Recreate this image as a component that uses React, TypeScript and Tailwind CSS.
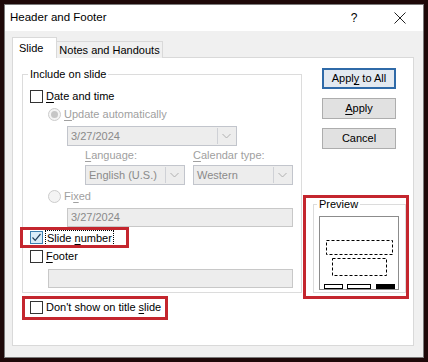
import React from "react";

const font = { fontFamily: '"Liberation Sans", Arial, sans-serif' };

function U({ children }: { children: React.ReactNode }) {
  return <span className="underline underline-offset-2 decoration-1">{children}</span>;
}

function Check({ checked = false }: { checked?: boolean }) {
  return checked ? (
    <div className="w-[13px] h-[13px] border border-[#3c7fb1] bg-[#d9ecf9] flex items-center justify-center shrink-0">
      <svg width="11" height="11" viewBox="0 0 11 11">
        <path d="M1.5 5.5 L4.2 8.3 L9.5 2" fill="none" stroke="#1f3d5a" strokeWidth="1.2" />
      </svg>
    </div>
  ) : (
    <div className="w-[13px] h-[13px] border border-[#333333] bg-white shrink-0" />
  );
}

function Radio({ selected = false }: { selected?: boolean }) {
  return (
    <div className="w-[13px] h-[13px] rounded-full border border-[#cccccc] bg-[#f4f4f4] flex items-center justify-center shrink-0">
      {selected && <div className="w-[7px] h-[7px] rounded-full bg-[#c6c6c6]" />}
    </div>
  );
}

function Combo({ text, w, h = 20 }: { text: string; w: string; h?: number }) {
  return (
    <div
      className={`${w} border border-[#c2c5cc] bg-[#ededed] flex items-stretch`}
      style={{ height: h }}
    >
      <div className="flex-1 flex items-center pl-[3px] text-[11px] text-[#8a8a8a] whitespace-nowrap">{text}</div>
      <div className="w-[18px] border-l border-[#cfd1d6] m-[1px] ml-0 flex items-center justify-center bg-[#ededed]">
        <svg width="9" height="6" viewBox="0 0 9 6">
          <path d="M0.5 1 L4.5 5 L8.5 1" fill="none" stroke="#b0b0b0" strokeWidth="1" />
        </svg>
      </div>
    </div>
  );
}

function Box({ text, w }: { text: string; w: string }) {
  return (
    <div className={`${w} h-[19px] border border-[#c8c8c8] bg-[#ededed] flex items-center pl-[3px] text-[11px] text-[#8a8a8a]`}>
      {text}
    </div>
  );
}

export default function App() {
  return (
    <div className="w-[428px] h-[362px] bg-[#1e0909] pt-[4px] pl-[4px] overflow-hidden" style={font}>
      <div className="w-[420px] h-[354px] border border-[#7a7a7a] bg-[#f0f0f0] flex flex-col">
        {/* Title bar */}
        <div className="h-[26px] bg-white flex items-center shrink-0">
          <div className="pl-[5px] text-[11.5px] text-black whitespace-nowrap">Header and Footer</div>
          <div className="ml-auto flex items-center">
            <div className="w-[46px] flex justify-center text-[12px] text-black">?</div>
            <div className="w-[46px] flex justify-center">
              <svg width="12" height="12" viewBox="0 0 12 12">
                <path d="M0.5 0.5 L11.5 11.5 M11.5 0.5 L0.5 11.5" stroke="#222" strokeWidth="1" />
              </svg>
            </div>
          </div>
        </div>

        {/* Body */}
        <div className="flex-1 pl-[7px] pt-[7px]">
          {/* Tabs */}
          <div className="h-[20px] flex items-end relative z-10 -mb-px">
            <div className="w-[45px] h-[21px] bg-white border border-[#d9d9d9] border-b-0 flex items-center pl-[6px] text-[11px] text-black">
              Slide
            </div>
            <div className="w-[106px] h-[17px] bg-[#f0f0f0] border border-[#d9d9d9] border-l-0 border-b-0 flex items-center justify-center text-[11px] text-black whitespace-nowrap">
              Notes and Handouts
            </div>
          </div>

          {/* Panel */}
          <div className="w-[402px] h-[289px] border border-[#d9d9d9] bg-white relative flex">
            {/* Left column */}
            <div className="ml-[9px] mt-[16px] flex flex-col">
              <div className="relative w-[280px] border border-[#dcdcdc] pt-[12px] pb-[4px] flex flex-col text-[11px] text-black">
                <span className="absolute -top-[9px] left-[5px] bg-white px-[2px] leading-[16px] whitespace-nowrap">Include on slide</span>

                <div className="h-[18px] flex items-center pl-[7px]">
                  <Check />
                  <span className="ml-[3px]"><U>D</U>ate and time</span>
                </div>
                <div className="h-[18px] flex items-center pl-[25px]">
                  <Radio selected />
                  <span className="ml-[3px] text-[#a0a0a0]"><U>U</U>pdate automatically</span>
                </div>
                <div className="mt-[3px] ml-[44px]">
                  <Combo text="3/27/2024" w="w-[170px]" />
                </div>
                <div className="h-[18px] flex items-center ml-[62px] text-[#a0a0a0]">
                  <span className="w-[108px]"><U>L</U>anguage:</span>
                  <span><U>C</U>alendar type:</span>
                </div>
                <div className="mt-[1px] ml-[62px] flex gap-[8px]">
                  <Combo text="English (U.S.)" w="w-[100px]" />
                  <Combo text="Western" w="w-[100px]" />
                </div>
                <div className="mt-[2px] h-[18px] flex items-center pl-[25px]">
                  <Radio />
                  <span className="ml-[3px] text-[#a0a0a0]">Fi<U>x</U>ed</span>
                </div>
                <div className="mt-[3px] ml-[44px]">
                  <Box text="3/27/2024" w="w-[226px]" />
                </div>
                <div className="mt-[1px] h-[19px] flex items-center pl-[7px]">
                  <Check checked />
                  <span className="ml-[2px] px-[1px] border border-dotted border-black leading-[14px] whitespace-nowrap">
                    Slide <U>n</U>umber
                  </span>
                </div>
                <div className="h-[18px] flex items-center pl-[7px]">
                  <Check />
                  <span className="ml-[3px]"><U>F</U>ooter</span>
                </div>
                <div className="mt-[4px] ml-[25px]">
                  <Box text="" w="w-[245px]" />
                </div>
              </div>

              <div className="mt-[5px] h-[18px] flex items-center pl-[8px] text-[11px] text-black whitespace-nowrap">
                <Check />
                <span className="ml-[3px]">Don't show on title <U>s</U>lide</span>
              </div>
            </div>

            {/* Right column */}
            <div className="ml-[11px] flex flex-col">
              <div className="mt-[10px] ml-[9px] flex flex-col gap-[9px]">
                <button className="w-[74px] h-[21px] border-2 border-[#2f6aa8] bg-[#e3e9f0] text-[11px] text-black flex items-center justify-center whitespace-nowrap">
                  Appl<U>y</U>&nbsp;to All
                </button>
                <button className="w-[74px] h-[21px] border border-[#adadad] bg-[#e1e1e1] text-[11px] text-black flex items-center justify-center">
                  <U>A</U>pply
                </button>
                <button className="w-[74px] h-[21px] border border-[#adadad] bg-[#e1e1e1] text-[11px] text-black flex items-center justify-center">
                  Cancel
                </button>
              </div>

              {/* Preview */}
              <div className="mt-[55px] relative w-[93px] h-[89px] border border-[#dcdcdc] pl-[5px] pt-[11px]">
                <span className="absolute -top-[9px] left-[3px] bg-white px-[2px] text-[11px] text-black leading-[16px]">Preview</span>
                <svg width="80" height="74" viewBox="0 0 80 74" className="block">
                  <rect x="0.5" y="0.5" width="79" height="73" fill="#fff" stroke="#8c8c8c" />
                  <rect x="7.5" y="24.5" width="66" height="14" fill="none" stroke="#000" strokeDasharray="3 2" />
                  <rect x="13.5" y="42.5" width="54" height="17" fill="none" stroke="#000" strokeDasharray="3 2" />
                  <rect x="5.5" y="68.5" width="18" height="4" fill="#fff" stroke="#000" />
                  <rect x="28.5" y="68.5" width="23" height="4" fill="#fff" stroke="#000" />
                  <rect x="57" y="68" width="19" height="5" fill="#000" />
                </svg>
              </div>
            </div>

            {/* Red annotation boxes */}
            <div className="absolute left-[7px] top-[169px] w-[109px] h-[21px] border-[3px] border-[#c4262e]" />
            <div className="absolute left-[9px] top-[238px] w-[146px] h-[24px] border-[3px] border-[#c4262e]" />
            <div className="absolute left-[290px] top-[137px] w-[106px] h-[104px] border-[3px] border-[#c4262e]" />
          </div>
        </div>
      </div>
    </div>
  );
}
